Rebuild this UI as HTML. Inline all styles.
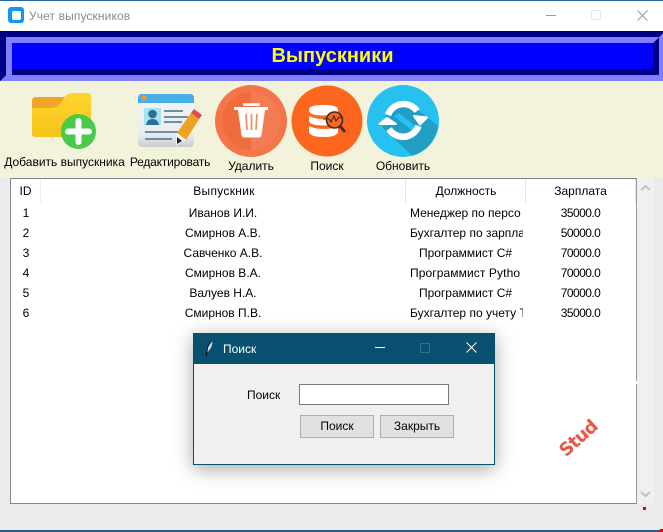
<!DOCTYPE html>
<html><head><meta charset="utf-8">
<style>
html,body{margin:0;padding:0;width:663px;height:532px;overflow:hidden;background:#ebebeb;font-family:"Liberation Sans",sans-serif;font-size:12px;color:#000}
.a{position:absolute}
.t{position:absolute;white-space:nowrap;text-align:center;transform:translateX(-50%);line-height:14px}
.n{letter-spacing:-.55px}
.clip{position:absolute;overflow:hidden;white-space:nowrap;line-height:14px}
</style></head><body>
<!-- title bar -->
<div class="a" style="left:0;top:0;width:663px;height:1px;background:#2a6a98"></div>
<div class="a" style="left:0;top:1px;width:663px;height:30px;background:#fff"></div>
<svg class="a" style="left:8px;top:7px" width="16" height="16"><rect width="16" height="16" rx="3" fill="#0f9be8"/><rect x="4" y="4" width="9" height="9" rx="2" fill="#fff"/></svg>
<div class="a" style="left:29px;top:9px;color:#8a8a8a;line-height:14px;white-space:nowrap;letter-spacing:.12px">Учет выпускников</div>
<svg class="a" style="left:540px;top:5px" width="123" height="22" fill="none"><path d="M6 10.500H16" stroke="#999"/><rect x="51.500" y="5.500" width="9" height="9" stroke="#e6e6e6"/><path d="M97.500 5.500L107.500 15.500M107.500 5.500L97.500 15.500" stroke="#999"/></svg>
<!-- header -->
<svg class="a" style="left:0;top:31px" width="663" height="50" shape-rendering="crispEdges">
<rect width="663" height="50" fill="#000087"/>
<rect x="6" y="6" width="657" height="44" fill="#8080ff"/>
<polygon points="0,50 6,44 663,44 663,50" fill="#8080ff"/>
<rect x="12" y="12" width="641" height="26" fill="#0000ff"/>
<rect x="12" y="38" width="647" height="6" fill="#000087"/>
<polygon points="653,12 659,6 659,44 653,44" fill="#000087"/>
<rect x="659" y="0" width="4" height="50" fill="#8080ff"/>
<polygon points="659,6 663,2 663,0 659,0" fill="#000087"/>
</svg>
<div class="t" style="left:332.500px;top:44px;font-size:20px;line-height:24px;font-weight:bold;color:#ffff00">Выпускники</div>
<!-- toolbar -->
<div class="a" style="left:0;top:81px;width:663px;height:97px;background:#f3f3dc"></div>
<!-- folder -->
<svg class="a" style="left:30px;top:91px" width="68" height="60">
<defs><linearGradient id="fg" x1="0" y1="0" x2="0" y2="1"><stop offset="0" stop-color="#fdd42f"/><stop offset="1" stop-color="#f8c41c"/></linearGradient>
<linearGradient id="cg" x1="0" y1="0" x2="0" y2="1"><stop offset="0" stop-color="#f2f3f3"/><stop offset=".75" stop-color="#eceded"/><stop offset="1" stop-color="#c9ccce"/></linearGradient></defs>
<path d="M2 10Q2 6 6 6H34L38 10V30H2Z" fill="#f0a428"/>
<path d="M2 19Q2 17 5 17H20Q28 17 32 10Q36 2 42 2H57Q61 2 61 6V43Q61 46 57 46H6Q2 46 2 43Z" fill="url(#fg)"/>
<circle cx="48.500" cy="40.500" r="17.500" fill="#47cb49"/>
<path d="M48.500 30V51M38 40.500H59" stroke="#fff" stroke-width="6" stroke-linecap="round"/>
</svg>
<div class="t" style="left:64.500px;top:155px">Добавить выпускника</div>
<!-- card -->
<svg class="a" style="left:136px;top:93px" width="70" height="56">
<rect x="2" y="1" width="56" height="53" rx="4" fill="url(#cg)"/>
<path d="M2 5Q2 1 6 1H54Q58 1 58 5V10H2Z" fill="#46b0e6"/>
<circle cx="8" cy="5" r="2.700" fill="#f09a27"/>
<rect x="8" y="15" width="17" height="17" fill="#a6e4ee"/>
<circle cx="16.500" cy="21" r="4.300" fill="#2f6f9e"/>
<path d="M10 32Q11 26 16.500 26T23 32Z" fill="#2f6f9e"/>
<path d="M28 18H47M28 24H52M28 29H46M9 39H42M9 46H36" stroke="#5f7f9c" stroke-width="1.800"/>
<path d="M55 20L63 26L50 47L41 40Z" fill="#f0a020"/>
<path d="M58 16L66 22L63 26L55 20Z" fill="#e04b54"/>
<path d="M41 40L50 47L40 52Z" fill="#fff"/>
<path d="M41 44L46 48L41 51Z" fill="#222"/>
</svg>
<div class="t" style="left:170px;top:155px;letter-spacing:-.2px">Редактировать</div>
<!-- trash -->
<svg class="a" style="left:215px;top:85px" width="72" height="72">
<circle cx="36" cy="36" r="36" fill="#f5754a"/>
<circle cx="36" cy="36" r="29" fill="#f47c55"/>
<path d="M36 7a29 29 0 0 0 0 58Z" fill="#ef6c3c"/>
<path d="M23 25H50L46.500 50Q46 52.500 44 52.500H29Q27 52.500 26.500 50Z" fill="#fff"/>
<path d="M19 23.500H53" stroke="#fff" stroke-width="3"/><path d="M29 21V19H44V21" fill="#fff" stroke="#fff" stroke-width="1.500"/>
<path d="M31 29L32 45M36.500 29V45M42 29L41 45" stroke="#f0906c" stroke-width="1.800"/>
</svg>
<div class="t" style="left:251px;top:159px">Удалить</div>
<!-- search -->
<svg class="a" style="left:291px;top:85px" width="72" height="72">
<circle cx="36" cy="36" r="35.500" fill="#fd661f"/>
<path d="M18 24.500Q18 20 32.500 20T47 24.500V26Q46 30.500 32.500 30.500T18 26Z" fill="#fff"/>
<path d="M18 31Q24 34 32.500 34Q42 34 47 31V36Q46 40.500 32.500 40.500T18 36Z" fill="#fff"/>
<path d="M18 41Q24 44 32.500 44Q42 44 47 41V47Q46 52 32.500 52T18 47Z" fill="#fff"/>
<circle cx="43.500" cy="35" r="8" fill="#fd661f" stroke="#3b2a25" stroke-width="1.600"/>
<path d="M49 41L54 47" stroke="#3b2a25" stroke-width="2.800"/>
<path d="M32 34H38L40 37L43 31L45 36L48 32L51 33" fill="none" stroke="#3b2a25" stroke-width="1.100"/>
</svg>
<div class="t" style="left:327px;top:159px">Поиск</div>
<!-- refresh -->
<svg class="a" style="left:367px;top:85px" width="72" height="72">
<circle cx="36" cy="36" r="36" fill="#27c1f1"/>
<path d="M20 28L36 19L51 25L71 41A36 36 0 0 1 45 70.800L15 42Z" fill="#209ec6"/>
<path d="M27 31L32 28L52 44L47 47Z" fill="#27c1f1"/>
<path d="M21 30A16.500 16.500 0 0 1 50 26" fill="none" stroke="#fff" stroke-width="6.500"/>
<path d="M47 31L60 32.500L53 39.500Z" fill="#fff" stroke="#fff" stroke-width="2" stroke-linejoin="round"/>
<path d="M51.500 41A16.500 16.500 0 0 1 22 44" fill="none" stroke="#fff" stroke-width="6.500"/>
<path d="M20 33L12.500 39L29 39Z" fill="#fff" stroke="#fff" stroke-width="2" stroke-linejoin="round"/>
</svg>
<div class="t" style="left:403px;top:159px">Обновить</div>
<!-- table -->
<div class="a" style="left:10px;top:178px;width:625px;height:324px;background:#fff;border:1px solid #82878f;border-right:1px solid #9a9a9a"></div>
<div class="a" style="left:40px;top:179px;width:1px;height:24px;background:#eee"></div>
<div class="a" style="left:405px;top:179px;width:1px;height:24px;background:#e8e8e8"></div>
<div class="a" style="left:525px;top:179px;width:1px;height:24px;background:#e8e8e8"></div>
<div class="a" style="left:635px;top:179px;width:1px;height:24px;background:#e8e8e8"></div>
<div class="t" style="left:25.500px;top:184px">ID</div>
<div class="t" style="left:224px;top:184px;letter-spacing:.3px">Выпускник</div>
<div class="t" style="left:466px;top:184px">Должность</div>
<div class="t" style="left:580.500px;top:184px">Зарплата</div>
<div class="t" style="left:26px;top:206px">1</div><div class="t" style="left:223px;top:206px">Иванов И.И.</div><div class="clip" style="left:410px;top:206px;width:113px">Менеджер по персо</div><div class="t n" style="left:580.500px;top:206px">35000.0</div>
<div class="t" style="left:26px;top:226px">2</div><div class="t" style="left:223px;top:226px">Смирнов А.В.</div><div class="clip" style="left:410px;top:226px;width:113px">Бухгалтер по зарпла</div><div class="t n" style="left:580.500px;top:226px">50000.0</div>
<div class="t" style="left:26px;top:246px">3</div><div class="t" style="left:223px;top:246px">Савченко А.В.</div><div class="t" style="left:465.500px;top:246px">Программист C#</div><div class="t n" style="left:580.500px;top:246px">70000.0</div>
<div class="t" style="left:26px;top:266px">4</div><div class="t" style="left:223px;top:266px">Смирнов В.А.</div><div class="clip" style="left:410px;top:266px;width:111px;letter-spacing:.1px">Программист Pytho</div><div class="t n" style="left:580.500px;top:266px">70000.0</div>
<div class="t" style="left:26px;top:286px">5</div><div class="t" style="left:223px;top:286px">Валуев Н.А.</div><div class="t" style="left:465.500px;top:286px">Программист C#</div><div class="t n" style="left:580.500px;top:286px">70000.0</div>
<div class="t" style="left:26px;top:306px">6</div><div class="t" style="left:223px;top:306px">Смирнов П.В.</div><div class="clip" style="left:410px;top:306px;width:113px">Бухгалтер по учету Т</div><div class="t n" style="left:580.500px;top:306px">35000.0</div>
<!-- scrollbar -->
<div class="a" style="left:637px;top:178px;width:17px;height:326px;background:#f0f0f0"></div>
<svg class="a" style="left:637px;top:178px" width="17" height="326" fill="none" stroke="#c2c2c2" stroke-width="2"><path d="M4 12L8.500 8L13 12"/><path d="M4 314L8.500 318L13 314"/></svg>
<!-- watermark -->
<div class="a" style="left:549px;top:429px;width:60px;text-align:center;font-size:18px;line-height:20px;font-weight:bold;color:#ea5545;transform:rotate(-42deg);font-family:'DejaVu Sans',sans-serif;letter-spacing:-.8px">Stud</div>
<div class="a" style="left:634px;top:381px;width:3px;height:3px;background:#fff"></div>
<!-- red dots -->
<div class="a" style="left:643px;top:507px;width:3px;height:3px;background:#e00000"></div>
<div class="a" style="left:660px;top:529px;width:3px;height:3px;background:#e00000"></div>
<div class="a" style="left:0;top:530px;width:660px;height:2px;background:#245f85"></div>
<!-- dialog -->
<div class="a" style="left:193px;top:333px;width:300px;height:130px;background:#f0f0f0;border:1px solid #07506f;box-shadow:0 4px 18px rgba(0,0,0,.35)"></div>
<div class="a" style="left:193px;top:333px;width:302px;height:31px;background:#07506f"></div>
<svg class="a" style="left:204px;top:341px" width="12" height="16" fill="none"><path d="M8 1Q3 4 3 11L2 15" stroke="#111" stroke-width="1.200"/><path d="M8 1.500Q4 5 4 10L7 6Z" fill="#a8c8f0" stroke="#dfe9f5" stroke-width=".8"/></svg>
<div class="a" style="left:223px;top:342px;color:#fff;line-height:14px">Поиск</div>
<svg class="a" style="left:370px;top:340px" width="115" height="18" fill="none"><path d="M5 7.500H15" stroke="#fff"/><rect x="50.500" y="3.500" width="9" height="9" stroke="#36708c"/><path d="M96.500 2.500L106.500 12.500M106.500 2.500L96.500 12.500" stroke="#fff"/></svg>
<div class="a" style="left:247px;top:388px;line-height:14px">Поиск</div>
<div class="a" style="left:299px;top:384px;width:148px;height:19px;background:#fff;border:1px solid #7a7a7a"></div>
<div class="a" style="left:300px;top:415px;width:72px;height:21px;background:#e1e1e1;border:1px solid #adadad;text-align:center;line-height:21px">Поиск</div>
<div class="a" style="left:380px;top:415px;width:72px;height:21px;background:#e1e1e1;border:1px solid #adadad;text-align:center;line-height:21px">Закрыть</div>
</body></html>
